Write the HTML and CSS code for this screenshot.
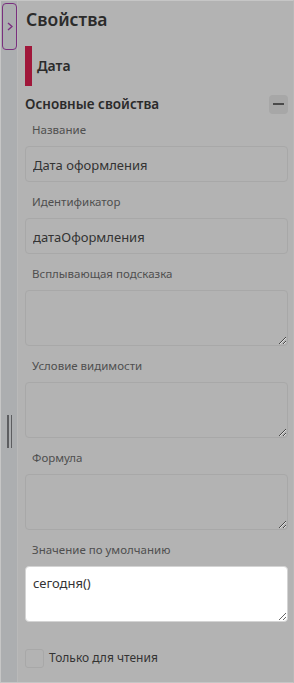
FILE: index.html
```html
<!DOCTYPE html>
<html lang="ru">
<head>
    <meta charset="UTF-8">
    <title>Свойства</title>
    <link rel="stylesheet" href="styles.css">
</head>
<body>

<div class="frame">
    <aside class="rail">
        <button class="rail_toggle" type="button">
            <svg width="6" height="9" viewBox="0 0 6 9"><path d="M1 1 L5 4.5 L1 8" fill="none" stroke="#7a2f7e" stroke-width="1.4"/></svg>
        </button>
        <div class="rail_handle"><span></span><span></span></div>
    </aside>

    <section class="panel">
        <h1 class="panel_title">Свойства</h1>

        <div class="panel_type">Дата</div>

        <div class="group_head">
            <span>Основные свойства</span>
            <button class="group_toggle" type="button"><i></i></button>
        </div>

        <div class="field">
            <label>Название</label>
            <input class="field_input" type="text" value="Дата оформления">
        </div>
        <div class="field">
            <label>Идентификатор</label>
            <input class="field_input" type="text" value="датаОформления">
        </div>
        <div class="field">
            <label>Всплывающая подсказка</label>
            <textarea class="field_area"></textarea>
        </div>
        <div class="field">
            <label>Условие видимости</label>
            <textarea class="field_area"></textarea>
        </div>
        <div class="field">
            <label>Формула</label>
            <textarea class="field_area"></textarea>
        </div>
        <div class="field">
            <label>Значение по умолчанию</label>
            <textarea class="field_area field_area-active">сегодня()</textarea>
        </div>

        <label class="check">
            <span class="check_box"></span>
            <span>Только для чтения</span>
        </label>
    </section>
</div>

</body>
</html>
```

FILE: styles.css
```css
body {
    margin: 0;
    font-family: "Noto Sans", "Open Sans", sans-serif;
    color: #2b2b2b;
}

.frame {
    display: flex;
    height: 683px;
    box-sizing: border-box;
    border: 1px solid #c6c6c6;
    border-right-color: #b8b8b8;
    background-color: #b3b3b3;
}

.rail {
    width: 16px;
    flex-shrink: 0;
    background-color: #acaeb0;
    border-right: 1px solid #b9b9b9;
    display: flex;
    flex-flow: column nowrap;
    align-items: flex-start;
}

.rail_toggle {
    margin: 2px 0 0 1px;
    width: 15px;
    height: 47px;
    padding: 0;
    box-sizing: border-box;
    border: 1px solid #7a2f7e;
    border-radius: 4px;
    background: transparent;
    display: flex;
    align-items: center;
    justify-content: center;
}

.rail_handle {
    margin: 365px 0 0 6px;
    display: flex;
    gap: 2px;
}

.rail_handle span {
    width: 1.5px;
    height: 33px;
    background-color: #5c5d60;
}

.panel {
    flex: 1;
    padding: 0 5px 0 7px;
}

.panel_title {
    margin: 6px 0 0 1px;
    font-size: 17.5px;
    line-height: 24px;
    font-weight: 600;
}

.panel_type {
    margin-top: 15px;
    height: 40px;
    line-height: 40px;
    border-left: 7px solid #a0173a;
    padding-left: 5px;
    font-size: 14px;
    font-weight: 600;
}

.group_head {
    margin-top: 8px;
    height: 20px;
    display: flex;
    align-items: center;
    justify-content: space-between;
    font-size: 13.5px;
    font-weight: 600;
}

.group_toggle {
    width: 19px;
    height: 19px;
    padding: 0;
    border: none;
    border-radius: 4px;
    background-color: #a7a7a7;
    display: flex;
    align-items: center;
    justify-content: center;
}

.group_toggle i {
    width: 11px;
    height: 2px;
    background-color: #4a4a4a;
}

.field {
    margin-top: 8px;
}

.field + .field {
    margin-top: 12px;
}

.field label {
    display: block;
    margin: 0 0 8px 7px;
    font-size: 11.5px;
    line-height: 16px;
    color: #4f4f4f;
}

.field_input,
.field_area {
    display: block;
    width: 100%;
    box-sizing: border-box;
    margin: 0;
    border: 1px solid #a8a8a8;
    border-radius: 4px;
    background: transparent;
    font-family: inherit;
    font-size: 13px;
    color: #333;
    outline: none;
}

.field_input {
    height: 36px;
    padding: 2px 7px 0;
}

.field_area {
    height: 56px;
    padding: 7px 7px;
    line-height: 18px;
}

.field_area-active {
    background-color: #fff;
    border-color: #d4d4d4;
}

.check {
    margin-top: 26px;
    display: flex;
    align-items: center;
    gap: 5px;
    font-size: 12px;
    line-height: 20px;
    color: #333;
}

.check_box {
    width: 19px;
    height: 19px;
    box-sizing: border-box;
    border: 1px solid #a8a8a8;
    border-radius: 3px;
}
```
